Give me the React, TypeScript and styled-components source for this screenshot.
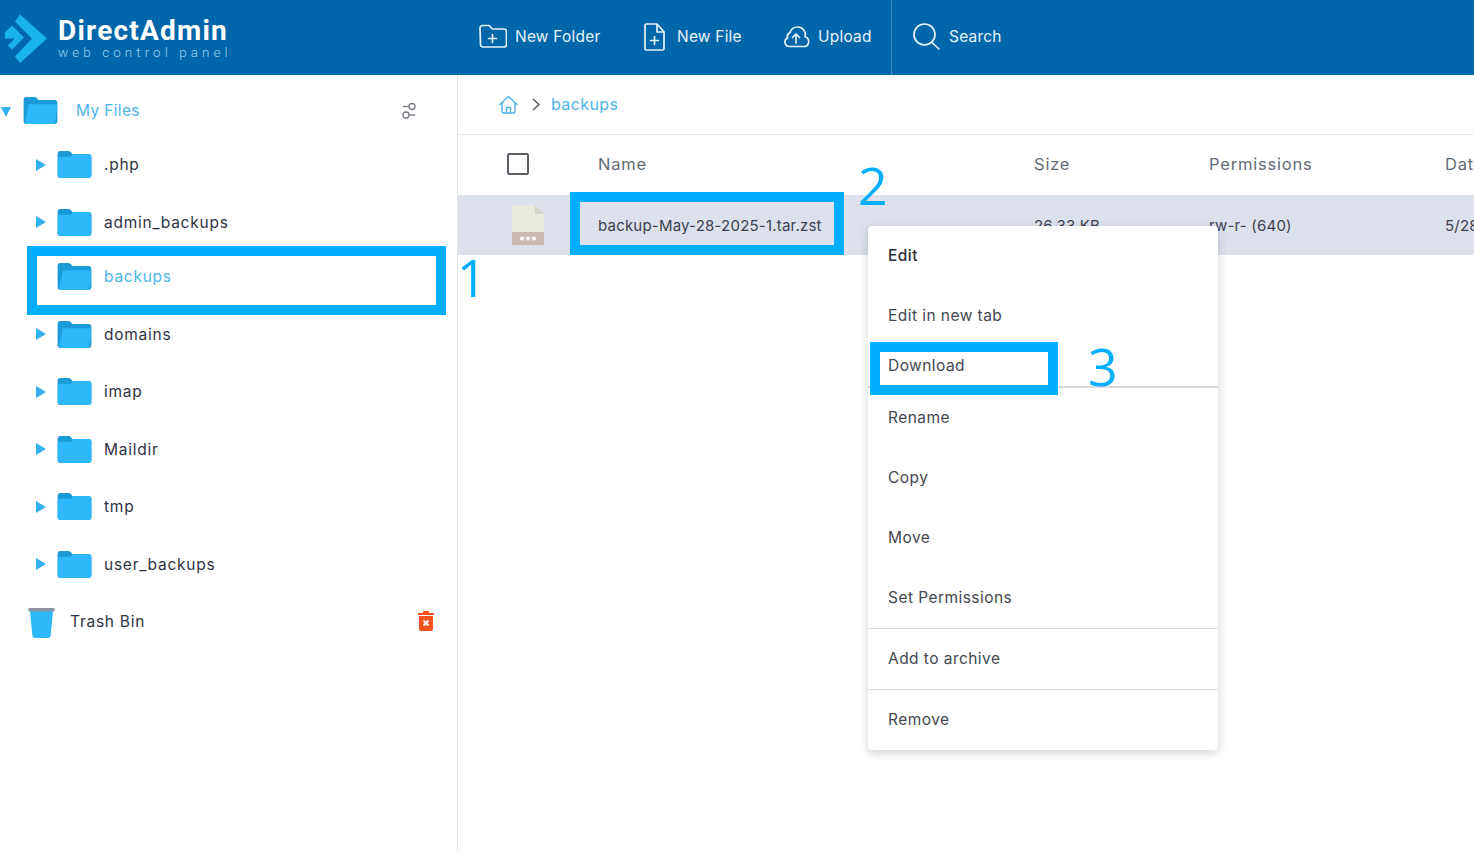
import React from 'react';
import styled, { createGlobalStyle } from 'styled-components';

const GlobalStyle = createGlobalStyle`
  html, body {
    margin: 0;
    padding: 0;
    height: 100%;
    overflow: hidden;
    background: #fff;
    font-family: Inter, "Noto Sans", sans-serif;
    font-size: 15.5px;
    letter-spacing: 0.45px;
    color: #2f3444;
  }
`;

const Page = styled.div`
  position: relative;
  width: 1474px;
  height: 852px;
  overflow: hidden;
`;

const Header = styled.header`
  display: flex;
  height: 75px;
  background: #0066aa;
  color: #e6f2fa;
`;

const Brand = styled.div`
  display: flex;
  align-items: center;
  gap: 11px;
  width: 473px;
  padding-left: 5px;
  box-sizing: border-box;
`;

const BrandText = styled.div`
  display: flex;
  flex-direction: column;
  font-family: Roboto, sans-serif;
`;

const BrandName = styled.span`
  font-size: 28px;
  line-height: 30px;
  font-weight: 700;
  color: #fff;
  letter-spacing: 1.2px;
`;

const BrandSub = styled.span`
  font-size: 13.5px;
  line-height: 13px;
  font-weight: 300;
  color: #9fd2ee;
  letter-spacing: 4.05px;
`;

const Tools = styled.nav`
  display: flex;
  align-items: center;
  width: 419px;
  padding-bottom: 2px;
  box-sizing: border-box;
  border-right: 1px solid #3d8fc6;
`;

const ToolButton = styled.div<{ $width: number; $gap?: number }>`
  display: flex;
  align-items: center;
  gap: ${(p) => p.$gap ?? 8}px;
  width: ${(p) => p.$width}px;
  padding-left: 6px;
  box-sizing: border-box;
  white-space: nowrap;
  letter-spacing: 0.2px;
`;

const SearchButton = styled(ToolButton)`
  padding-left: 21px;
  padding-bottom: 2px;
`;

const Body = styled.div`
  display: flex;
  height: 777px;
`;

const Sidebar = styled.aside`
  width: 458px;
  flex: none;
  box-sizing: border-box;
  border-right: 1px solid #e2e4e8;
  padding-top: 9px;
  letter-spacing: 0.75px;
`;

const RootRow = styled.div`
  display: flex;
  align-items: center;
  height: 52px;
  padding-left: 1px;
`;

const RootLabel = styled.span`
  flex: 1;
  margin-left: 18px;
  color: #4cb5ea;
  letter-spacing: 0.35px;
`;

const SideIconSlot = styled.span`
  display: flex;
  margin: 2px 40px 0 0;
`;

const TreeRow = styled.div<{ $lift?: boolean }>`
  display: flex;
  align-items: center;
  height: ${(p) => (p.$lift ? 54.5 : 57.5)}px;
  box-sizing: border-box;
  padding-left: 36px;
  padding-bottom: ${(p) => (p.$lift ? 3 : 0)}px;
`;

const Caret = styled.span<{ $hidden?: boolean }>`
  width: 0;
  height: 0;
  border-left: 10px solid ${(p) => (p.$hidden ? 'transparent' : '#33b1ee')};
  border-top: 6px solid transparent;
  border-bottom: 6px solid transparent;
  margin-right: 11px;
`;

const CaretDown = styled.span`
  width: 0;
  height: 0;
  border-top: 10px solid #33b1ee;
  border-left: 5.5px solid transparent;
  border-right: 5.5px solid transparent;
  margin-right: 12px;
  margin-top: 3px;
`;

const TreeLabel = styled.span<{ $active?: boolean }>`
  margin-left: 12px;
  color: ${(p) => (p.$active ? '#4cb5ea' : '#2f3444')};
`;

const TrashRow = styled.div`
  display: flex;
  align-items: center;
  height: 57.5px;
  padding-left: 28px;
`;

const BinSlot = styled.span`
  display: flex;
  margin-top: 2px;
`;

const TrashLabel = styled.span`
  flex: 1;
  margin-left: 15px;
`;

const TrashAction = styled.span`
  display: flex;
  margin: 0 23px 2px 0;
`;

const Main = styled.main`
  flex: 1;
  min-width: 0;
  overflow: hidden;
`;

const Breadcrumb = styled.div`
  display: flex;
  align-items: center;
  height: 60px;
  padding: 0 0 1px 41px;
  box-sizing: border-box;
  border-bottom: 1px solid #e6e7ea;
  color: #4cb5ea;
  font-size: 16px;
  letter-spacing: 0.4px;
`;

const CrumbDivider = styled.span`
  display: flex;
  margin: 0 11px 0 14px;
`;

const TableRow = styled.div<{ $selected?: boolean }>`
  display: grid;
  grid-template-columns: 140px 436px 175px 236px 120px;
  align-items: center;
  height: 60px;
  width: 1107px;
  background: ${(p) => (p.$selected ? '#dde1ec' : 'transparent')};
  color: ${(p) => (p.$selected ? '#3b4050' : '#636a78')};
  white-space: nowrap;
  font-size: 15px;
  letter-spacing: 0.2px;
`;

const HeaderRow = styled(TableRow)`
  box-sizing: border-box;
  padding-bottom: 2px;
  font-size: 16.5px;
  letter-spacing: 0.8px;
`;

const IconCell = styled.div`
  display: flex;
  padding-left: 49px;
`;

const FileCell = styled(IconCell)`
  padding-left: 54px;
`;

const CheckBox = styled.span`
  width: 18px;
  height: 18px;
  border: 2px solid #5b5f66;
  border-radius: 2px;
  display: block;
`;

const Menu = styled.div`
  position: absolute;
  left: 868px;
  top: 226px;
  width: 350px;
  background: #fff;
  border-radius: 4px;
  box-shadow: 0 3px 10px rgba(40, 50, 70, 0.22);
  color: #43474f;
`;

const MenuItem = styled.div<{ $bold?: boolean; $short?: boolean; $line?: boolean }>`
  display: flex;
  align-items: center;
  height: ${(p) => (p.$short ? 39 : 59)}px;
  padding: 0 0 1px 20px;
  color: ${(p) => (p.$bold ? '#2a2e37' : '#43474f')};
  font-weight: ${(p) => (p.$bold ? 500 : 400)};
  border-bottom: ${(p) => (p.$line ? '1px solid #dcdde0' : 'none')};
`;

const DownloadItem = styled(MenuItem)`
  border-bottom: 2px solid #d8d9dc;
`;

const Callout = styled.div<{ $x: number; $y: number; $w: number; $h: number }>`
  position: absolute;
  left: ${(p) => p.$x}px;
  top: ${(p) => p.$y}px;
  width: ${(p) => p.$w}px;
  height: ${(p) => p.$h}px;
  box-sizing: border-box;
  border: 10px solid #00aeff;
`;

const CalloutNumber = styled.span<{ $x: number; $y: number }>`
  position: absolute;
  left: ${(p) => p.$x}px;
  top: ${(p) => p.$y}px;
  font-family: "Open Sans", sans-serif;
  font-size: 52px;
  line-height: 54px;
  font-weight: 400;
  letter-spacing: 0;
  color: #00aeff;
`;

const Logo = () => (
  <svg width="42" height="50" viewBox="0 0 42 50">
    <polygon points="15,1.500 42,25.500 15,50 10,43.500 27,25.500 10,8.500" fill="#1ab4ec" />
    <polygon points="0,19.500 7,12.500 19,24.500 7,36.500 3,32.500 10,25.500 0,25.500" fill="#1ab4ec" />
  </svg>
);

const FolderPlusIcon = () => (
  <svg width="28" height="25" viewBox="0 0 28 25" fill="none" stroke="#e6f2fa" strokeWidth="1.7" strokeLinejoin="round" strokeLinecap="round">
    <path d="M1 4a2.500 2.500 0 0 1 2.500-2.500h6.500l3.500 3.500h11.500a2.500 2.500 0 0 1 2.500 2.500v13a2.500 2.500 0 0 1-2.500 2.500h-21a2.500 2.500 0 0 1-2.500-2.500z" />
    <path d="M13.500 10.500v8M9.500 14.500h8" />
  </svg>
);

const FilePlusIcon = () => (
  <svg width="21" height="28" viewBox="0 0 21 28" fill="none" stroke="#e6f2fa" strokeWidth="1.7" strokeLinejoin="round" strokeLinecap="round">
    <path d="M2.500 1h10.500l7 8v16.500a1.500 1.500 0 0 1-1.500 1.500h-16a1.500 1.500 0 0 1-1.500-1.500v-23a1.500 1.500 0 0 1 1.500-1.500z" />
    <path d="M13 1.500v7.500h7" />
    <path d="M10.500 13.500v8M6.500 17.500h8" />
  </svg>
);

const CloudUpIcon = () => (
  <svg width="28" height="23" viewBox="0 0 28 23" fill="none" stroke="#e6f2fa" strokeWidth="1.7" strokeLinejoin="round" strokeLinecap="round">
    <path d="M7 21.500h14.500a5 5 0 0 0 1.500-9.800 7.500 7.500 0 0 0-7.500-9.700 8 8 0 0 0-7.500 5.500 5 5 0 0 0-2.500 5.500 4.500 4.500 0 0 0 1.500 8.500z" />
    <path d="M14 18v-9M10.500 12.500l3.500-3.500 3.500 3.500" />
  </svg>
);

const SearchIcon = () => (
  <svg width="28" height="27" viewBox="0 0 28 27" fill="none" stroke="#e6f2fa" strokeWidth="1.7" strokeLinecap="round">
    <circle cx="11.500" cy="11.500" r="10.500" />
    <path d="M19 19.500l7 6.500" />
  </svg>
);

const HomeIcon = () => (
  <svg width="19" height="19" viewBox="0 0 19 19" fill="none" stroke="#4cb5ea" strokeWidth="1.4" strokeLinejoin="round" strokeLinecap="round">
    <path d="M1 9.500l8.500-8 8.500 8" />
    <path d="M3 8v8.500a1.500 1.500 0 0 0 1.500 1.500h10a1.500 1.500 0 0 0 1.500-1.500v-8.500" />
    <path d="M7.500 18v-5.500h4v5.500" />
  </svg>
);

const ChevronIcon = () => (
  <svg width="8" height="13" viewBox="0 0 8 13" fill="none" stroke="#4a4d55" strokeWidth="1.3">
    <path d="M1 1l6 5.500-6 5.500" />
  </svg>
);

const SlidersIcon = () => (
  <svg width="15" height="18" viewBox="0 0 15 18" fill="none" stroke="#7b7f88" strokeWidth="1.4">
    <circle cx="10" cy="4.500" r="3" />
    <path d="M1 4.500h6" />
    <circle cx="4" cy="13" r="3" />
    <path d="M7 13h6" />
  </svg>
);

const FolderIcon = ({ open }: { open?: boolean }) => (
  <svg width="35" height="27" viewBox="0 0 35 28">
    <path d="M0 3a3 3 0 0 1 3-3h8c2 0 3 1 4 3h17a3 3 0 0 1 3 3v19a3 3 0 0 1-3 3h-29a3 3 0 0 1-3-3z" fill="#1a9ad6" />
    {open ? (
      <path d="M5 9.500a2 2 0 0 1 2-2h26a2 2 0 0 1 2 2.300l-2 15.700a3 3 0 0 1-3 2.500h-27a1.500 1.500 0 0 1-1.500-1.700z" fill="#2db8fc" />
    ) : (
      <path d="M0 8a2 2 0 0 1 2-2h10c2 0 3-1 4-3h16a3 3 0 0 1 3 3v19a3 3 0 0 1-3 3h-29a3 3 0 0 1-3-3z" fill="#2db8fc" />
    )}
  </svg>
);

const BinIcon = () => (
  <svg width="27" height="30" viewBox="0 0 27 31">
    <path d="M1.500 2h24l-2.500 26a3 3 0 0 1-3 3h-13a3 3 0 0 1-3-3z" fill="#2db8fc" />
    <rect x="0" y="0" width="27" height="3.500" rx="1" fill="#8a92a3" />
  </svg>
);

const TrashActionIcon = () => (
  <svg width="16" height="20" viewBox="0 0 16 20">
    <path d="M5.500 0h5l1 2h4.500v2h-16v-2h4.500z" fill="#f4511e" />
    <path d="M1 5h14v13a2 2 0 0 1-2 2h-10a2 2 0 0 1-2-2z" fill="#f4511e" />
    <path d="M5.500 9.500l5 5M10.500 9.500l-5 5" stroke="#fff" strokeWidth="2" />
  </svg>
);

const ArchiveFileIcon = () => (
  <svg width="32" height="40" viewBox="0 0 32 40">
    <path d="M1 0h22l9 9v21h-32v-29a1 1 0 0 1 1-1z" fill="#eaeadf" />
    <path d="M23 0l9 9h-9z" fill="#d4d4c8" />
    <path d="M0 27h32v12a1 1 0 0 1-1 1h-30a1 1 0 0 1-1-1z" fill="#c9b9b3" />
    <circle cx="10" cy="33.500" r="2" fill="#fff" />
    <circle cx="16" cy="33.500" r="2" fill="#fff" />
    <circle cx="22" cy="33.500" r="2" fill="#fff" />
  </svg>
);

const folders = [
  { name: '.php' },
  { name: 'admin_backups' },
  { name: 'backups', active: true, open: true },
  { name: 'domains', open: true },
  { name: 'imap' },
  { name: 'Maildir' },
  { name: 'tmp' },
  { name: 'user_backups' },
];

const App: React.FC = () => (
  <Page>
    <GlobalStyle />
    <Header>
      <Brand>
        <Logo />
        <BrandText>
          <BrandName>DirectAdmin</BrandName>
          <BrandSub>web control panel</BrandSub>
        </BrandText>
      </Brand>
      <Tools>
        <ToolButton $width={165}><FolderPlusIcon />New Folder</ToolButton>
        <ToolButton $width={138} $gap={12}><FilePlusIcon />New File</ToolButton>
        <ToolButton $width={115}><CloudUpIcon />Upload</ToolButton>
      </Tools>
      <SearchButton $width={140}><SearchIcon />Search</SearchButton>
    </Header>
    <Body>
      <Sidebar>
        <RootRow>
          <CaretDown />
          <FolderIcon open />
          <RootLabel>My Files</RootLabel>
          <SideIconSlot><SlidersIcon /></SideIconSlot>
        </RootRow>
        {folders.map((f) => (
          <TreeRow key={f.name} $lift={f.active}>
            <Caret $hidden={f.active} />
            <FolderIcon open={f.open} />
            <TreeLabel $active={f.active}>{f.name}</TreeLabel>
          </TreeRow>
        ))}
        <TrashRow>
          <BinSlot><BinIcon /></BinSlot>
          <TrashLabel>Trash Bin</TrashLabel>
          <TrashAction><TrashActionIcon /></TrashAction>
        </TrashRow>
      </Sidebar>
      <Main>
        <Breadcrumb>
          <HomeIcon />
          <CrumbDivider><ChevronIcon /></CrumbDivider>
          <span>backups</span>
        </Breadcrumb>
        <HeaderRow>
          <IconCell><CheckBox /></IconCell>
          <span>Name</span>
          <span>Size</span>
          <span>Permissions</span>
          <span>Date</span>
        </HeaderRow>
        <TableRow $selected>
          <FileCell><ArchiveFileIcon /></FileCell>
          <span>backup-May-28-2025-1.tar.zst</span>
          <span>26.33 KB</span>
          <span>rw-r- (640)</span>
          <span>5/28/2025</span>
        </TableRow>
      </Main>
    </Body>
    <Menu>
      <MenuItem $bold>Edit</MenuItem>
      <MenuItem>Edit in new tab</MenuItem>
      <DownloadItem $short>Download</DownloadItem>
      <MenuItem>Rename</MenuItem>
      <MenuItem>Copy</MenuItem>
      <MenuItem>Move</MenuItem>
      <MenuItem $line>Set Permissions</MenuItem>
      <MenuItem $line>Add to archive</MenuItem>
      <MenuItem>Remove</MenuItem>
    </Menu>
    <Callout $x={27} $y={246} $w={419} $h={69} />
    <Callout $x={570} $y={192} $w={274} $h={63} />
    <Callout $x={870} $y={342} $w={188} $h={53} />
    <CalloutNumber $x={457} $y={250}>1</CalloutNumber>
    <CalloutNumber $x={858} $y={158}>2</CalloutNumber>
    <CalloutNumber $x={1088} $y={339}>3</CalloutNumber>
  </Page>
);

export default App;
